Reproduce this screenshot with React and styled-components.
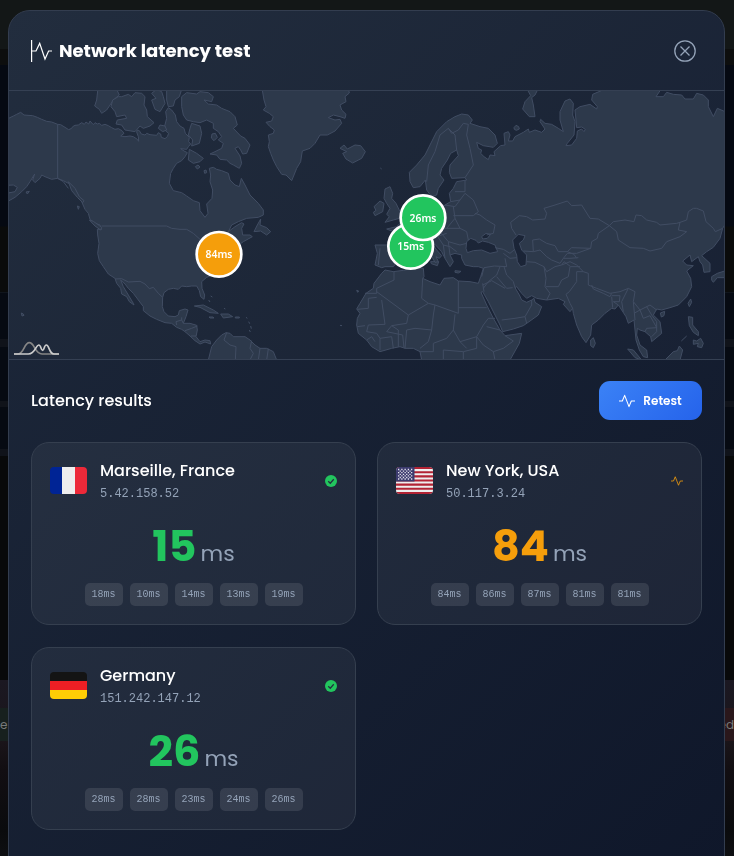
import React from 'react';
import styled, { createGlobalStyle } from 'styled-components';

const GlobalStyle = createGlobalStyle`
    * {
        box-sizing: border-box;
    }
    body {
        margin: 0;
        background: #07090d;
        color: #fff;
        font-family: 'Poppins', 'Inter', sans-serif;
    }
    h1, h2, h3, p, ul {
        margin: 0;
        padding: 0;
    }
`;

const GREEN = '#22c55e';
const AMBER = '#f59e0b';

const Page = styled.div`
    height: 100vh;
    overflow: hidden;
    display: flex;
    flex-direction: column;
`;

const PageTop = styled.div`
    height: 49px;
    background: #131717;
`;

const PageMiddle = styled.div`
    height: 631px;
    background: linear-gradient(#0d0e0e 0 16px, #050912 16px 177px, #0a0b0b 178px 243px, #10151c 243px 244px, #060a12 244px 290px, #10131a 290px 298px, #060a12 298px 352px, #10131a 352px 358px, #060a12 358px 400px, #10131a 400px 407px, #08090a 407px);
`;

const PageTiles = styled.div`
    flex: 1;
    display: flex;
    justify-content: space-between;
    padding-top: 28px;
    background: linear-gradient(#1b1822, #1a151a 60px, #120e12 90px, #0a0b0d 150px, #0e0f12);
`;

const PageTag = styled.span`
    width: 40px;
    height: 33px;
    line-height: 34px;
    font-size: 12px;
    color: #777a7a;
    text-align: ${({ $align }) => $align};
    background: ${({ $bg }) => $bg};
`;

const Overlay = styled.div`
    position: fixed;
    inset: 0;
    padding: 10px 9px 0 8px;
    overflow: hidden;
`;

const Modal = styled.section`
    min-height: calc(100vh + 20px);
    overflow: hidden;
    border: 1px solid #333d4f;
    border-radius: 22px;
    background: linear-gradient(135deg, #1e293b, #0f172a);
`;

const ModalHeader = styled.header`
    display: flex;
    align-items: center;
    justify-content: space-between;
    height: 80px;
    padding: 0 28px 0 22px;
    border-bottom: 1px solid #354053;
    background: rgba(255, 255, 255, .02);
`;

const Title = styled.h1`
    display: flex;
    align-items: center;
    gap: 6px;
    font-size: 18px;
    line-height: 27px;
    font-weight: 700;
`;

const CloseButton = styled.button`
    display: flex;
    padding: 0;
    border: 0;
    background: none;
    color: #94a3b8;
    cursor: pointer;
`;

const MapPanel = styled.div`
    border-bottom: 1px solid #354053;
    background: rgba(255, 255, 255, .02);
    svg {
        display: block;
        width: 100%;
    }
`;

const Results = styled.div`
    padding: 21px 22px;
`;

const ResultsHeader = styled.div`
    display: flex;
    align-items: center;
    justify-content: space-between;
    margin-bottom: 22px;
`;

const SectionTitle = styled.h2`
    font-size: 16px;
    font-weight: 500;
`;

const RetestButton = styled.button`
    display: flex;
    align-items: center;
    justify-content: center;
    gap: 8px;
    width: 103px;
    height: 39px;
    padding: 0;
    border: 0;
    border-radius: 11px;
    background: linear-gradient(135deg, #3b82f6, #2563eb);
    color: #fff;
    font-family: inherit;
    font-size: 12px;
    font-weight: 600;
    cursor: pointer;
`;

const Cards = styled.div`
    display: grid;
    grid-template-columns: repeat(2, 1fr);
    gap: 22px 21px;
`;

const Card = styled.article`
    padding: 14px 18px 18px;
    border: 1px solid #353f4f;
    border-radius: 18px;
    background: rgba(255, 255, 255, .05);
`;

const CardHeader = styled.div`
    display: flex;
    align-items: center;
    gap: 13px;
`;

const Flag = styled.svg`
    flex: none;
    width: 37px;
    height: 27px;
    border-radius: 4px;
`;

const Place = styled.div`
    flex: 1;
`;

const PlaceName = styled.h3`
    font-size: 16px;
    line-height: 27px;
    font-weight: 500;
`;

const Address = styled.p`
    font-family: 'Liberation Mono', monospace;
    font-size: 12px;
    line-height: 20px;
    color: #94a3b8;
`;

const Average = styled.p`
    display: flex;
    align-items: baseline;
    justify-content: center;
    gap: 4px;
    padding: 15px 0 10px;
    line-height: 54px;
    font-size: 43px;
    font-weight: 700;
    color: ${({ $color }) => $color};
`;

const Unit = styled.span`
    font-size: 22px;
    line-height: 27px;
    font-weight: 400;
    color: #94a3b8;
`;

const Samples = styled.ul`
    display: flex;
    justify-content: center;
    gap: 7px;
    list-style: none;
`;

const Sample = styled.li`
    width: 38px;
    height: 23px;
    border-radius: 5px;
    background: rgba(255, 255, 255, .1);
    font-family: 'Liberation Mono', monospace;
    font-size: 10px;
    line-height: 23px;
    text-align: center;
    color: #94a3b8;
`;

const PulseIcon = ({ size, color = 'currentColor' }) => (
    <svg width={size} height={size} viewBox="0 0 24 24" fill="none" stroke={color} strokeWidth="1.6" strokeLinejoin="round" aria-hidden="true">
        <path d="M0 12h5l3.5-8.5L15 20.5l3.5-8.5H24" />
    </svg>
);

const MonitorIcon = () => (
    <svg width="22" height="22" viewBox="0 0 22 22" fill="none" stroke="#fff" strokeWidth="1.2" aria-hidden="true">
        <path d="M.6 0v22M1 11h4l3.7-7.6L14 19l3.6-8H21" />
    </svg>
);

const CloseIcon = () => (
    <svg width="22" height="22" viewBox="0 0 22 22" fill="none" stroke="currentColor" strokeWidth="1.3" aria-hidden="true">
        <circle cx="11" cy="11" r="10.2" />
        <path d="M6.5 6.5l9 9M15.5 6.5l-9 9" />
    </svg>
);

const CheckIcon = () => (
    <svg width="12" height="12" viewBox="0 0 24 24" aria-hidden="true">
        <circle cx="12" cy="12" r="12" fill={GREEN} />
        <path fill="none" stroke="#242e3f" strokeWidth="2.4" d="M6.5 12.5l4 4 7-8" />
    </svg>
);

const flags = {
    fr: (
        <Flag viewBox="0 0 37 27" role="img" aria-label="France">
            <path fill="#002495" d="M0 0h12v27H0z" />
            <path fill="#eee" d="M12 0h13v27H12z" />
            <path fill="#ed2939" d="M25 0h12v27H25z" />
        </Flag>
    ),
    us: (
        <Flag viewBox="0 0 37 27" role="img" aria-label="USA">
            <path fill="#eee" d="M0 0h37v27H0z" />
            <path stroke="#b22334" strokeWidth="2.08" d="M0 1.04h37M0 5.19h37M0 9.35h37M0 13.5h37M0 17.65h37M0 21.81h37M0 25.96h37" />
            <path fill="#3c3b6e" d="M0 0h18.5v14.54H0z" />
            <g stroke="#e4e4ee" strokeWidth="1.3" strokeDasharray="1.3 1.95">
                <path d="M2 2.5h15M2 5.7h15M2 8.9h15M2 12h15" />
                <path d="M3.6 4.1h12M3.6 7.3h12M3.6 10.5h12" />
            </g>
        </Flag>
    ),
    de: (
        <Flag viewBox="0 0 37 27" role="img" aria-label="Germany">
            <path fill="#141414" d="M0 0h37v9H0z" />
            <path fill="#ed1f24" d="M0 9h37v9H0z" />
            <path fill="#ffcd05" d="M0 18h37v9H0z" />
        </Flag>
    ),
};

const servers = [
    { flag: 'fr', name: 'Marseille, France', ip: '5.42.158.52', avg: 15, samples: [18, 10, 14, 13, 19], x: 1232, y: 739 },
    { flag: 'us', name: 'New York, USA', ip: '50.117.3.24', avg: 84, samples: [84, 86, 87, 81, 81], x: 657, y: 763 },
    { flag: 'de', name: 'Germany', ip: '151.242.147.12', avg: 26, samples: [28, 28, 23, 24, 26], x: 1269, y: 653 },
];

const latencyColor = (ms) => (ms < 50 ? GREEN : AMBER);

const americas = [
    // North America
    'M20,358L40,348 50,343 62,337 72,345 84,346 98,347 112,352 125,358 140,364 155,366 173,373 182,374 195,382 206,389 215,385 218,380 225,376 235,375 245,368 253,373 258,366 266,372 270,363 280,374 285,368 292,372 298,370 305,376 315,373 325,377 335,383 345,388 355,386 366,392 372,400 362,408 375,410 390,408 400,410 412,418 416,424 415,410 410,396 412,390 418,392 424,402 435,405 440,400 450,404 470,406 475,398 482,402 484,412 495,416 502,410 506,400 496,392 494,378 500,355 497,335 505,323 515,330 526,345 530,365 540,378 552,385 556,400 568,412 566,425 572,432 565,440 560,448 542,446 552,453 562,458 555,470 545,482 530,490 520,505 512,520 508,550 520,572 545,578 560,588 580,602 598,608 600,632 615,652 624,640 620,612 636,595 638,570 630,545 632,525 628,505 640,502 650,508 665,512 685,520 690,540 705,555 718,560 724,535 735,555 750,585 775,610 790,630 790,645 775,652 740,655 715,665 695,675 685,695 705,680 725,668 732,672 725,685 728,705 750,705 757,710 730,725 720,732 715,745 700,765 690,790 650,812 630,828 620,832 605,845 606,865 614,885 612,898 602,890 598,872 590,858 575,858 560,860 545,858 535,868 520,865 505,868 492,878 488,892 487,920 492,935 505,948 525,950 535,945 538,932 555,927 564,930 558,950 550,970 570,970 590,976 592,990 588,1010 600,1025 615,1020 630,1022 632,1032 615,1026 600,1032 585,1022 570,1008 555,995 545,988 530,982 515,970 495,968 470,958 450,948 430,932 430,920 415,900 400,880 385,865 375,852 362,840 370,860 385,885 400,910 402,915 388,905 380,890 365,882 362,865 350,850 345,835 325,822 310,800 298,782 293,760 297,730 293,705 292,688 305,688 300,675 285,670 270,658 265,640 255,628 245,605 232,580 215,555 205,550 190,542 172,535 155,538 135,530 125,525 120,535 105,548 98,540 104,522 90,545 80,560 65,575 45,592 20,606 20,580 45,575 52,562 40,555 20,556Z',
    // Vancouver and the northern coast
    'M268,660L280,664 305,682 302,690 285,678Z M205,545L225,565 238,590 252,602 248,608 232,592 215,572Z',
    // Arctic islands
    'M293,273L300,268 350,268 358,285 340,300 330,315 320,330 305,340 298,328 284,318 290,300Z',
    'M365,290L385,283 395,290 405,278 425,280 435,290 432,315 440,330 442,350 462,368 450,378 430,385 420,378 405,395 375,390 365,375 348,372 352,360 380,355 375,345 350,350 345,335 333,320 338,300 355,290Z',
    'M455,280L470,268 485,275 490,290 495,310 480,335 465,328 455,300 468,295Z',
    'M500,268L545,268 538,290 525,300 520,318 505,320 500,300Z',
    'M480,375L495,378 500,390 488,395 475,385Z',
    'M545,290L560,278 590,282 600,275 625,278 640,290 635,305 612,300 625,312 650,315 665,325 690,335 705,350 712,375 700,385 722,408 735,415 750,435 740,460 728,462 722,450 715,440 705,445 720,468 725,490 718,505 700,495 690,490 680,480 660,478 650,465 630,462 645,455 665,445 670,430 655,420 665,410 655,395 640,385 640,370 620,360 600,368 580,365 560,360 550,345 545,320Z',
    'M575,370L600,378 605,400 598,430 575,438 578,420 565,405 570,385Z',
    'M568,448L590,460 610,475 600,485 580,490 565,480Z M636,402L646,400 652,412 642,422 634,414Z M586,500l8,-5 6,6 -8,6Z M612,512l6,-2 2,8 -6,2Z',
    // Newfoundland
    'M782,657L780,675 800,683 812,695 800,705 782,693 762,695 772,675Z',
    // Caribbean
    'M583,918L610,915 640,930 655,940 630,938 600,922Z M662,942L685,942 698,950 670,954Z M627,951l12,0 3,3 -12,0Z M706,951h12v3h-12Z M626,900l4,6 M632,888l5,3 M672,925l4,2 M738,952l4,3 M746,965l3,6 M752,978l2,8 M748,990l3,6 M64,939l6,3 2,4 -6,2Z M78,576l10,-2 -6,8Z M232,618l6,2 -3,8Z',
    // South America
    'M625,1080L635,1040 650,1020 665,1005 678,998 690,1000 700,1010 735,1010 750,1020 765,1035 780,1045 800,1045 820,1055 830,1080Z',
];

const americaBorders = 'M173,373V535L190,545 205,565 M305,678H500L515,685 540,688 560,688 580,700 600,718 M345,837L365,836 385,846 420,844 435,852 448,866 460,862 475,880 488,892 M530,975L528,965 545,960 545,952 M545,960L550,970 M555,992L575,985 592,978 M573,1008L588,1008 M680,998L672,1020 690,1035 708,1040 706,1080 M755,1022L750,1045 760,1060 750,1080 M780,1045L775,1080 M805,1046L800,1080';

const greenland = [
    'M66,10L72,45 78,65 70,75 88,85 100,95 95,108 78,112 90,125 103,135 100,145 85,150 88,170 85,185 92,205 100,225 110,245 125,268 138,270 155,287 162,270 170,250 182,230 185,210 187,198 210,190 225,175 240,150 262,150 285,138 305,115 300,103 285,105 265,98 280,90 300,95 315,100 318,88 305,75 300,60 318,50 315,35 328,24 325,10Z',
    'M300,190L312,180 322,192 345,180 362,182 376,200 365,220 338,234 318,222 308,205 320,200Z',
    // Britain and Ireland
    'M435,312L450,305 458,325 455,340 468,355 480,380 478,400 460,405 435,412 448,395 440,388 450,370 440,355 432,340Z',
    'M402,365L420,348 432,355 428,380 405,392 400,382 408,376Z',
    'M350,616l6,2 -3,4Z M421,249l4,3 M300,721l6,1 M645,557l18,2 -8,5 -10,-2Z M572,530l24,0 -4,12 -18,-6Z',
];

const eurasia = 'M-210,290L-212,262 -190,240 -165,210 -150,180 -130,140 -100,110 -75,95 -55,87 -35,90 -23,105 -30,115 0,125 25,130 45,150 52,175 40,187 10,182 -10,172 -5,190 5,195 2,205 12,215 25,224 30,210 45,212 42,200 62,182 75,180 72,145 85,140 90,150 85,168 98,168 105,155 130,142 145,132 148,142 165,135 185,142 195,132 180,110 182,103 195,115 215,118 235,130 250,140 240,105 240,80 255,48 270,42 280,55 278,90 285,110 282,150 262,175 258,182 275,180 290,160 292,138 305,132 312,140 316,133 305,126 290,128 288,105 285,75 300,65 330,58 350,72 352,65 335,45 338,28 380,10 545,10 528,35 550,35 560,22 580,28 605,30 615,42 640,42 650,25 670,30 685,45 685,65 700,95 712,70 740,82 740,410 728,430 720,460 700,487 680,500 665,512 690,535 690,560 672,562 668,540 660,530 655,515 635,530 630,510 608,528 620,540 640,542 620,558 632,580 635,605 620,635 595,660 570,668 545,675 530,672 520,690 540,710 545,745 515,770 512,755 495,740 480,735 472,730 470,750 480,780 500,795 503,818 490,815 478,795 468,765 465,735 462,705 445,715 438,695 425,675 415,660 405,672 395,670 375,685 355,705 335,720 332,750 318,773 305,755 290,720 280,685 278,670 270,680 250,658 255,650 235,640 200,645 170,640 155,632 140,640 125,625 110,605 105,608 118,630 125,645 140,652 155,645 162,640 165,652 185,665 175,690 150,708 130,722 100,732 68,740 60,720 45,690 25,650 8,620 3,622 20,660 40,700 60,735 75,752 125,745 118,775 90,825 -175,825 -180,800 -200,790 -225,790 -240,785 -265,790 -300,800 -325,785 -340,765 -365,745 -370,720 -368,700 -360,685 -370,672 -360,655 -342,625 -320,610 -318,595 -295,565 -285,555 -260,560 -230,556 -190,548 -170,550 -168,575 -172,580 -150,590 -120,600 -108,580 -80,578 -65,588 -30,590 -5,595 2,575 10,550 -5,545 -20,545 -45,540 -55,520 -55,510 -75,505 -90,510 -80,530 -90,545 -105,520 -115,500 -135,478 -145,475 -130,495 -115,512 -122,520 -132,515 -125,530 -135,532 -150,505 -170,500 -200,505 -240,520 -260,545 -285,545 -295,548 -315,540 -308,505 -315,480 -280,480 -270,470 -260,440 -280,432 -250,425 -230,405 -190,390 -175,350 -175,330 -160,330 -160,370 -120,370 -105,360 -88,350 -92,325 -80,310 -70,290 -40,285 -45,278 -85,280 -92,262 -90,240 -65,212 -70,195 -88,205 -98,225 -115,250 -120,270 -108,285 -125,310 -130,330 -145,335 -160,315 -164,285 -180,305 -200,308Z'
    // Black Sea, Azov, Caspian
    + 'M-42,490L-40,470 -28,460 -12,466 -5,474 8,468 25,472 45,480 53,500 30,505 5,495 -20,497 -38,503Z'
    + 'M5,455L18,445 32,448 22,460 8,462Z'
    + 'M98,465L115,448 135,452 130,465 118,475 125,495 140,510 138,540 122,545 112,530 110,510 102,490Z';

const asiaIslands = [
    'M140,10L175,10 165,30 155,38 160,60 165,95 148,95 128,72 135,50 152,32Z',
    'M102,128l6,-7 8,4 2,7 -9,4 -6,-3Z',
    'M332,765L340,758 346,775 340,788 332,782Z M624,655L632,642 635,652 628,665Z M541,684L554,679 552,692 544,696Z',
    'M625,695L638,697 638,720 655,740 655,752 640,742 628,722Z M640,765L650,768 662,760 670,775 665,788 652,785 655,775 640,778Z M604,768l16,-15',
    'M695,575L712,565 740,556 740,578 712,578 700,592 695,585Z',
    'M555,825L580,800 592,797 598,783 608,795 600,825Z M443,792L460,795 485,825 465,818Z',
];

const eurasiaBorders = [
    // central Asia and China
    'M108,450L95,430 92,412 118,392 140,395 158,405 195,402 200,385 192,370 225,360 262,348 275,362 305,360 330,400 355,402 388,422 400,410 435,405 462,410 468,390 485,392 500,405 530,412 540,420 590,415 600,412 595,435 620,440 600,455 560,470 545,490 510,498 490,490 450,488 415,465 410,440 388,422 355,445 352,460 335,470 332,490 275,488 262,500 235,500 225,482 200,475 178,462 158,465 160,500 130,498',
    'M600,412L620,405 625,380 640,370 650,370 670,378 678,410 700,430 706,440 728,430',
    'M160,500L180,495 200,515 215,525 240,535 250,520 262,505 290,505 332,490 M140,530L165,532 192,545 200,560 225,545 245,540 270,530 290,540 310,560 325,565 325,600 350,610 390,625 420,620 445,610 465,620 460,650 480,675 510,660 530,675',
    'M250,520L270,520 295,518 M262,500L282,508 290,520 M245,540L252,530 272,545 300,545',
    // south Asia
    'M192,545L198,580 195,605 210,625 200,645 M72,545L80,570 100,590 105,608 M198,605L235,605 245,585 265,575 270,545 M290,560L290,590 268,620 258,628 270,655 278,670 M290,560L310,560 M335,600L340,612 370,625 390,635 395,625 M395,635L398,668 M395,632L420,632 418,650 400,650 415,660 M445,610L425,650 430,680 M460,650L465,705 M480,675L462,685 M480,675L490,700 510,692 530,728 500,730 495,740 M500,665L515,690 530,710 530,740 515,755',
    // Middle East
    'M45,488L70,493 90,505 102,495 M70,505L90,520 110,518 M75,520L80,545 43,543 12,548 5,575 M10,610L25,590 50,570 60,545 M50,575L80,610 98,608 M8,600L35,587 75,610 M65,705L105,700 135,695 155,660 155,645 M135,695L140,715 M8,595L12,620',
    // Africa
    'M-65,588V685 M-65,668H20 M-172,580L-175,640 -155,655 -135,660 -65,685 M-155,655L-215,690 -310,620 M-258,558L-258,585 -310,610 -310,625 -345,625 M-310,637L-335,640 -335,670 -368,673 M-295,645L-285,718 -335,720 -340,740 M-215,690L-220,715 -265,722 -280,740 M-135,660L-140,690 -145,735 -195,730 -220,735 M-145,735L-155,770 -180,790 M-75,688L-80,735 -100,760 -140,775 -140,800 M-80,735L-60,770 -10,755 10,720 25,700 45,700 M-60,770L-40,790 M20,725L60,735 M-10,755L10,780 40,800 70,790 100,768 75,752 M-10,755L-10,790 -50,800 -110,795 -110,825',
    'M-340,740L-310,745 -300,760 -300,795 M-368,725L-345,722 M-340,765L-325,755 -315,770 M-300,760L-265,755 -260,790 M-265,722L-245,735 -245,785 M-232,750L-228,788 M-220,735L-225,790 M-280,740L-232,750 M-140,800H-180 M-50,800V825 M40,800L45,825',
    // Europe
    'M-160,290L-155,240 -135,200 -120,150 -95,130 -85,145 -65,135 -50,115 -35,118 M-95,130L-75,150 -70,195 M-35,118L-40,150 -30,190 -20,240 -45,278 M-45,285L-45,320 -75,320 M-88,350L-60,345 -45,325 -20,345 -5,380 -20,392 -80,392 M-105,360L-75,365 -60,345 M-80,365L-75,400 -100,430 -130,430 M-15,385L0,390 20,405 45,420 40,445 20,450 M-100,430L-60,430 -40,440 -35,465 M-120,440L-95,470 -60,480 -40,475 M-95,470L-90,510 M-130,450L-110,480 -105,520 M-75,400L-60,430 M-300,490L-305,540 M-270,478L-235,500 M-130,455L-100,445 M-110,480L-90,485 -70,500',
];

const WorldMap = () => (
    <svg viewBox="27 273 2145 804" role="img" aria-label="Server locations">
        <g fill="#2d394b" stroke="#414d63" strokeWidth="3" strokeLinejoin="round" fillRule="evenodd">
            {americas.map((d) => <path key={d} d={d} />)}
            <path fill="none" d={americaBorders} />
            <g transform="translate(720 255)">
                {greenland.map((d) => <path key={d} d={d} />)}
            </g>
            <g transform="translate(1440 255)">
                <path d={eurasia} />
                {asiaIslands.map((d) => <path key={d} d={d} />)}
                {eurasiaBorders.map((d) => <path key={d} fill="none" d={d} />)}
            </g>
        </g>
        <g fill="none" strokeWidth="5">
            <path stroke="#858585" d="M42,1062H54C72,1062 72,1028 88,1028C104,1028 104,1062 126,1062H177" />
            <path stroke="#ccc" d="M42,1062H85C106,1062 107,1035 116,1035C124,1035 122,1051 128,1051C133,1051 132,1035 139,1035C148,1035 147,1062 162,1062H177" />
        </g>
        {servers.map(({ name, avg, x, y }) => (
            <g key={name}>
                <circle cx={x} cy={y} r="67" fill={latencyColor(avg)} stroke="#fff" strokeWidth="8" />
                <text x={x} y={y + 12} textAnchor="middle" fill="#fff" fontFamily="Noto Sans, sans-serif" fontWeight="600" fontSize="31">{avg}ms</text>
            </g>
        ))}
    </svg>
);

const ServerCard = ({ server }) => (
    <Card>
        <CardHeader>
            {flags[server.flag]}
            <Place>
                <PlaceName>{server.name}</PlaceName>
                <Address>{server.ip}</Address>
            </Place>
            {server.avg < 50 ? <CheckIcon /> : <PulseIcon size={12} color={AMBER} />}
        </CardHeader>
        <Average $color={latencyColor(server.avg)}>
            {server.avg}
            <Unit>ms</Unit>
        </Average>
        <Samples>
            {server.samples.map((ms, i) => <Sample key={i}>{ms}ms</Sample>)}
        </Samples>
    </Card>
);

const App = () => {
    return (
        <>
            <GlobalStyle />
            <Page>
                <PageTop />
                <PageMiddle />
                <PageTiles>
                    <PageTag $bg="#17201e" $align="left">e</PageTag>
                    <PageTag $bg="#2a171b" $align="right">ed</PageTag>
                </PageTiles>
            </Page>
            <Overlay>
                <Modal role="dialog" aria-labelledby="latency-title">
                    <ModalHeader>
                        <Title id="latency-title">
                            <MonitorIcon />
                            Network latency test
                        </Title>
                        <CloseButton aria-label="Close">
                            <CloseIcon />
                        </CloseButton>
                    </ModalHeader>
                    <MapPanel>
                        <WorldMap />
                    </MapPanel>
                    <Results>
                        <ResultsHeader>
                            <SectionTitle>Latency results</SectionTitle>
                            <RetestButton>
                                <PulseIcon size={16} />
                                Retest
                            </RetestButton>
                        </ResultsHeader>
                        <Cards>
                            {servers.map((server) => <ServerCard key={server.ip} server={server} />)}
                        </Cards>
                    </Results>
                </Modal>
            </Overlay>
        </>
    );
};

export default App;
